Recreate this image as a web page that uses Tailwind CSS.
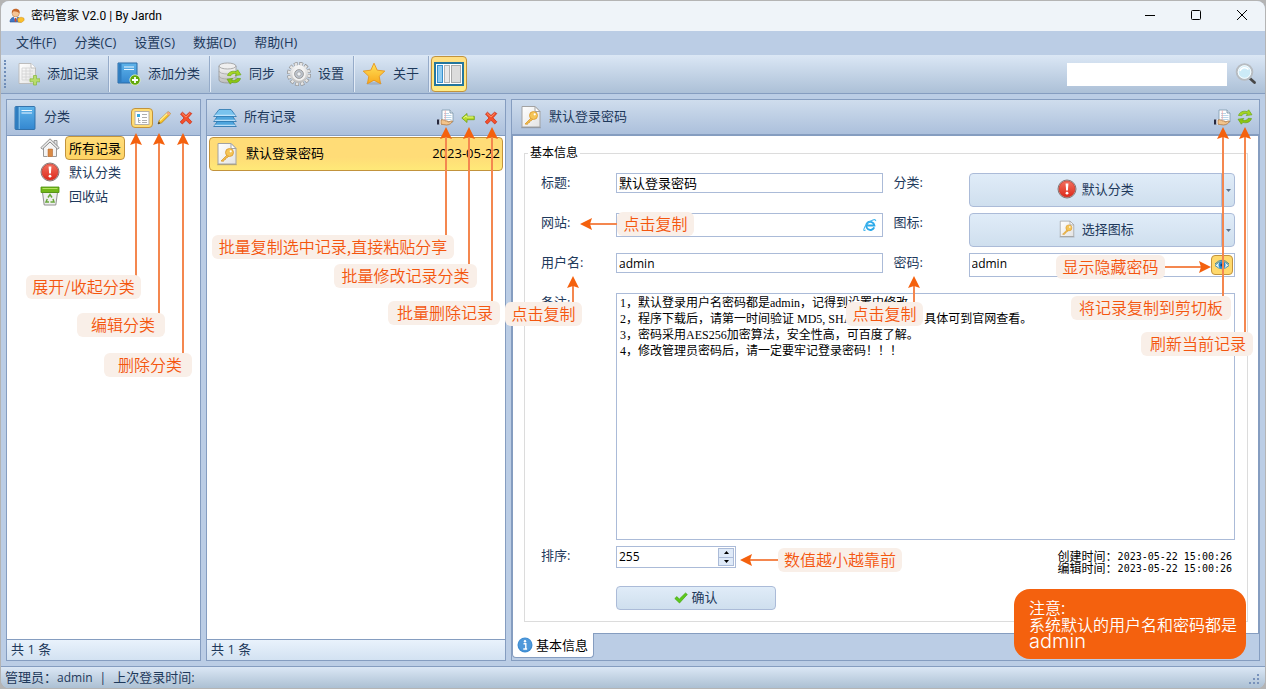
<!DOCTYPE html>
<html lang="zh-CN">
<head>
<meta charset="utf-8">
<meta name="viewport" content="width=device-width, initial-scale=1">
<title>密码管家 V2.0 | By Jardn</title>
<script src="https://cdn.jsdelivr.net/npm/@tailwindcss/browser@4"></script>
</head>
<body class="bg-[#b4b4b4] font-['Open_Sans','Noto_Sans_CJK_SC',sans-serif] text-[13px] leading-[18px] text-[#1e395b]">

<!-- Shared icons -->
<svg class="absolute h-0 w-0" aria-hidden="true">
  <defs>
    <linearGradient id="gBlue" x1="0" y1="0" x2="0" y2="1"><stop offset="0" stop-color="#5fb4ea"/><stop offset="1" stop-color="#3487d0"/></linearGradient>
    <linearGradient id="gGold" x1="0" y1="0" x2="0" y2="1"><stop offset="0" stop-color="#ffe25a"/><stop offset="1" stop-color="#f8a81c"/></linearGradient>
    <linearGradient id="gGray" x1="0" y1="0" x2="0" y2="1"><stop offset="0" stop-color="#fafafa"/><stop offset="1" stop-color="#bcbcbc"/></linearGradient>
    <linearGradient id="gPage" x1="0" y1="0" x2="1" y2="1"><stop offset="0" stop-color="#fff"/><stop offset="1" stop-color="#e3e3e3"/></linearGradient>
    <linearGradient id="gRed" x1="0" y1="0" x2="0" y2="1"><stop offset="0" stop-color="#f2705e"/><stop offset="1" stop-color="#dd2a1c"/></linearGradient>
  </defs>
  <symbol id="keydoc" viewBox="0 0 22 24">
    <path d="M2 1.500h13l5 5V22H2z" fill="url(#gPage)" stroke="#a2a2a2"/>
    <path d="M1 22.700h20" stroke="#777" stroke-opacity=".5"/>
    <path d="M15 1.500V6.500h5z" fill="#fff" stroke="#a2a2a2" stroke-linejoin="round"/>
    <path d="M11.500 12.500L5 19l2.500.3.500-1.500 1.500-.3.300-1.500 1.500-.3 2-2" fill="#f2c04c" stroke="#d9982e" stroke-width=".8" stroke-linejoin="round"/>
    <circle cx="13.500" cy="10.500" r="4" fill="#f5c557" stroke="#d9982e" stroke-width=".8"/>
    <circle cx="14.700" cy="9.300" r="1.100" fill="#fff"/>
  </symbol>
  <symbol id="alert" viewBox="0 0 20 20">
    <circle cx="10" cy="10" r="9" fill="#d9d2d0" stroke="#7a6c6a" stroke-width=".9"/>
    <circle cx="10" cy="10" r="8" fill="url(#gRed)" stroke="#c32a20" stroke-width=".6"/>
    <path d="M8.600 4.500h2.800l-.5 7H9.100z" fill="#fff"/><circle cx="10" cy="14.200" r="1.400" fill="#fff"/>
  </symbol>
  <symbol id="cross" viewBox="0 0 14 14">
    <path d="M1.500 3L3.500 1.200 7 4.500l3.500-3.300L12.800 2.500 9 6.800l3.800 4L10.800 13 7 9.300 3.300 13l-2.100-2L5 7z" fill="#f4502c" stroke="#c9260c" stroke-width=".7" stroke-linejoin="round"/>
    <path d="M3 2.500L7 6l3.700-3.500" fill="none" stroke="#ff9a6e" stroke-width=".8"/>
  </symbol>
  <symbol id="share" viewBox="0 0 17 17">
    <path d="M5 1h8l3 3v9H5z" fill="#fff" stroke="#86a0b4" stroke-width=".9"/>
    <path d="M13 1v3h3" fill="#dfe9f1" stroke="#6f8ba2" stroke-width=".8"/>
    <path d="M7 4.500h5M7 6.500h7.500M7 8.500h7.500M7 10.500h7.500" stroke="#a9cbe2" stroke-width=".8"/>
    <path d="M8.300 1.500v11" stroke="#ee9d9d" stroke-width=".7"/>
    <path d="M0 10.500h2.500v5H0z" fill="#26283e"/><path d="M2.500 10.500h1.500v5H2.500z" fill="#fff"/>
    <path d="M4 11c2-.8 3.200.2 4.500.8 1.500 0 2.700.2 2.400 1.200 1.700-.2 3-1.400 4.600-1-.6 2-2.800 3.800-5.800 4-2 .1-3.800-.8-5.700-.8z" fill="#f2c48c" stroke="#a86e38" stroke-width=".7"/>
  </symbol>
  <symbol id="refresh" viewBox="0 0 16 16">
    <path d="M1.500 6.500C2.300 3 6.500 1.300 10 2.700l1.700-1.900 3.300 5-5.800.8 1.300-1.700C8 3.900 5.600 4.800 4.800 6.700z" fill="#a4d421" stroke="#5fa012" stroke-width=".6" stroke-linejoin="round"/>
    <path d="M14.500 9.500c-.8 3.500-5 5.200-8.500 3.800l-1.700 1.900-3.300-5 5.800-.8-1.300 1.700c2.500 1 4.900.1 5.700-1.800z" fill="#8cc612" stroke="#5fa012" stroke-width=".6" stroke-linejoin="round"/>
  </symbol>
  <symbol id="book" viewBox="0 0 22 24">
    <path d="M1 1.500Q1 .5 2 .5h18q1 0 1 1v21q0 1-1 1H2q-1 0-1-1z" fill="url(#gBlue)" stroke="#2a6ba6" stroke-width=".9"/>
    <path d="M1.500 1h3.300v22H1.500z" fill="#2f7dbf"/><path d="M5.200 1v22" stroke="#a9d8f5" stroke-width=".7"/>
    <path d="M7.500 4.500h10.500M7.500 7h10.500" stroke="#e9f6ff" stroke-width="1.100"/>
  </symbol>
</svg>

<div class="relative flex min-h-screen flex-col p-px">
  <div class="flex flex-1 flex-col overflow-hidden rounded-lg bg-[#bbcde5]">

    <header class="flex h-[30px] shrink-0 items-center justify-between bg-[#eff4f9] pl-2 text-xs text-black">
      <div class="flex items-center gap-[6px]">
        <svg class="h-4 w-4" viewBox="0 0 16 16" aria-hidden="true">
          <path d="M1 14c0-4 3-5 5.500-5S12 10 12 14z" fill="#3f78c8" stroke="#28518f" stroke-width=".6"/>
          <path d="M4.800 9l1.700 3.500L8.200 9z" fill="#fff"/><path d="M6 10h1l.5 3-1 1-1-1z" fill="#d1462f"/>
          <circle cx="6.700" cy="5.300" r="3.600" fill="#f6c595" stroke="#b67a44" stroke-width=".5"/>
          <path d="M2.900 5.200C2.500 1.500 5 .6 7 .7c2.500.1 4.200 1.900 3.500 4.700C9.500 3.500 6 3.800 4.500 3.200z" fill="#c5672a"/>
          <path d="M8.500 10.500l3.500-1.300 2.800.8.400 2.300-2.600 2.100-3.500-.4z" fill="#fbc02c" stroke="#d08d16" stroke-width=".5"/>
        </svg>
        <h1 class="font-['Roboto','Noto_Sans_CJK_SC',sans-serif]">密码管家 V2.0 | By Jardn</h1>
      </div>
      <div class="flex h-full text-black">
        <button class="flex w-[46px] items-center justify-center" aria-label="最小化"><svg class="h-3 w-3" viewBox="0 0 12 12"><path d="M1 5.500h10" stroke="#000"/></svg></button>
        <button class="flex w-[46px] items-center justify-center" aria-label="最大化"><svg class="h-3 w-3" viewBox="0 0 12 12"><rect x="1.500" y=".5" width="9" height="9" rx="1" fill="none" stroke="#000"/></svg></button>
        <button class="flex w-[46px] items-center justify-center" aria-label="关闭"><svg class="h-3 w-3" viewBox="0 0 12 12"><path d="M1 0l10 10M11 0L1 10" stroke="#000"/></svg></button>
      </div>
    </header>

    <nav class="flex h-6 shrink-0 items-center gap-[18px] pb-[2px] pl-[15px]" aria-label="菜单">
      <button>文件(F)</button><button>分类(C)</button><button>设置(S)</button><button>数据(D)</button><button>帮助(H)</button>
    </nav>

    <div class="flex h-[39px] shrink-0 items-center border-b border-[#859dc0] bg-linear-to-b from-[#dbe7f5] to-[#acc0d7] pr-2" role="toolbar">
      <div class="ml-[3px] h-7 w-0 border-l-2 border-dotted border-[#6f8db8]"></div>
      <button class="ml-[10px] flex items-center gap-[7px]">
        <svg class="h-6 w-6" viewBox="0 0 24 24"><path d="M3 1.500h12l4.500 4.500v15.500H3z" fill="url(#gPage)" stroke="#bdbdbd"/><path d="M6 6h8M6 9h11M6 12h11M6 15h11M6 18h8M6 6v12M10 6v12M14 6v12" stroke="#d2d2d2" stroke-width=".8"/><path d="M15 1.500V6h4.500" fill="#fff" stroke="#bdbdbd"/><path d="M17.500 13.500h3v3.300h3.500v3h-3.500V23h-3v-3.200H14v-3h3.500z" fill="#b9dd6c" stroke="#8cbb45" stroke-width=".8"/></svg>
        <span class="pb-[2px]">添加记录</span></button>
      <div class="ml-[9px] h-9 w-px bg-[#95abc9] shadow-[1px_0_0_#e3ecf7]"></div>
      <button class="ml-2 flex items-center gap-[7px]">
        <svg class="h-6 w-6" viewBox="0 0 24 24"><path d="M1 1h19v20H1z" fill="url(#gBlue)" stroke="#2a6ba6"/><path d="M1.500 1.500h3v19h-3z" fill="#2f7dbf"/><path d="M7 5h10M7 7.500h10" stroke="#e9f6ff"/><circle cx="18" cy="18" r="5.200" fill="#62a80b" stroke="#e3f3c8" stroke-width=".8"/><path d="M18 15v6M15 18h6" stroke="#fff" stroke-width="1.800"/></svg>
        <span class="pb-[2px]">添加分类</span></button>
      <div class="ml-[9px] h-9 w-px bg-[#95abc9] shadow-[1px_0_0_#e3ecf7]"></div>
      <button class="ml-2 flex items-center gap-[7px]">
        <svg class="h-6 w-6" viewBox="0 0 24 24"><path d="M1 4v14c0 4 17 4 17 0V4z" fill="url(#gGray)" stroke="#949494" stroke-width=".8"/><ellipse cx="9.500" cy="4" rx="8.500" ry="3" fill="#efefef" stroke="#999" stroke-width=".8"/><path d="M1 9c0 4 17 4 17 0M1 14c0 4 17 4 17 0" fill="none" stroke="#a5a5a5" stroke-width=".8"/><use href="#refresh" x="8" y="7" width="16" height="16"/></svg>
        <span class="pb-[2px]">同步</span></button>
      <button class="ml-3 flex items-center gap-[7px]">
        <svg class="h-6 w-6" viewBox="0 0 24 24"><circle cx="12" cy="12" r="10" fill="none" stroke="#8c8c8c" stroke-width="4" stroke-dasharray="3.600 1.636"/><circle cx="12" cy="12" r="10" fill="none" stroke="#e4e4e4" stroke-width="2.800" stroke-dasharray="2.600 2.636" stroke-dashoffset="-.5"/><circle cx="12" cy="12" r="9" fill="url(#gGray)"/><circle cx="12" cy="12" r="5.800" fill="none" stroke="#f3f3f3" stroke-width="1.800"/><circle cx="12" cy="12" r="4.300" fill="#c2cad6" stroke="#999" stroke-width="1"/><circle cx="12" cy="12" r="2.200" fill="#edf1f5" stroke="#999" stroke-width=".8"/></svg>
        <span class="pb-[2px]">设置</span></button>
      <div class="ml-[9px] h-9 w-px bg-[#95abc9] shadow-[1px_0_0_#e3ecf7]"></div>
      <button class="ml-2 flex items-center gap-[7px]">
        <svg class="h-6 w-6" viewBox="0 0 24 24"><ellipse cx="12" cy="21.500" rx="8" ry="1.300" fill="#8a9ab0" fill-opacity=".5"/><path d="M12 1.200l3.200 7 7.600.9-5.600 5.200 1.400 7.500L12 18.200l-6.600 3.600 1.400-7.500L1.200 9.100l7.600-.9z" fill="url(#gGold)" stroke="#e7951c" stroke-width=".9" stroke-linejoin="round"/></svg>
        <span class="pb-[2px]">关于</span></button>
      <div class="ml-[9px] h-9 w-px bg-[#95abc9] shadow-[1px_0_0_#e3ecf7]"></div>
      <button class="ml-[2px] flex h-9 w-9 items-center justify-center rounded-sm border border-[#c2933c] bg-linear-to-b from-[#ffdf83] to-[#ffec85]" aria-label="布局" aria-pressed="true">
        <svg class="h-6 w-[30px]" viewBox="0 0 30 24"><rect x="1" y="1" width="28" height="22" fill="#fff" stroke="#23769e" stroke-width="2"/><rect x="3.500" y="3.500" width="5" height="17" fill="#8fccf1" stroke="#3690cd"/><rect x="10.500" y="3.500" width="5" height="17" fill="#e9e9e9" stroke="#b2b2b2"/><rect x="17.500" y="3.500" width="9" height="17" fill="#dcdcdc" stroke="#a9a9a9"/></svg>
      </button>
      <input type="search" aria-label="搜索" class="ml-auto h-[23px] w-40 bg-white px-1 outline-none">
      <button class="ml-2" aria-label="开始搜索">
        <svg class="h-6 w-[22px]" viewBox="0 0 22 24"><path d="M14.500 16l5 4.500" stroke="#474747" stroke-width="2.800" stroke-linecap="round"/><circle cx="9.500" cy="10" r="7.800" fill="#d7effa" stroke="#b7bcc1" stroke-width="2"/><circle cx="9.500" cy="10" r="6.300" fill="#ccebf8" stroke="#fff" stroke-width=".8"/><path d="M5 9c1-3.500 6-4.500 8.500-1.500" stroke="#fff" stroke-width="1.500" fill="none"/></svg>
      </button>
    </div>

    <main class="flex flex-1 gap-[5px] p-[5px]">

      <section class="flex w-[195px] shrink-0 flex-col border border-[#859dc0] bg-white" aria-label="分类">
        <div class="flex h-9 items-center border-b border-[#859dc0] bg-linear-to-b from-[#cfdded] to-[#acc0dc] pr-[7px] pl-[7px]">
          <svg class="h-6 w-[22px]" aria-hidden="true"><use href="#book"/></svg>
          <h2 class="ml-2 pb-[3px]">分类</h2>
          <button class="mr-1 ml-auto flex h-5 w-[22px] items-center justify-center rounded-sm border border-[#c2933c] bg-[#ffdc74]" aria-label="展开或收起分类"><svg class="h-4 w-4" viewBox="0 0 16 16"><rect x="1" y="1.500" width="14" height="13" fill="#fff" stroke="#b5b0a8"/><path d="M3 4h3v3H3z" fill="#35a9df"/><path d="M8 4.500h5M8 7.500h5M4.500 8v4.500M4.500 10.500h2M8 10.500h5M4.500 12.500h2M8 12.500h5" stroke="#a5a5a5" stroke-width=".9"/></svg></button>
          <button class="mr-2" aria-label="编辑分类"><svg class="h-[14px] w-[14px]" viewBox="0 0 14 14"><path d="M1 13l1.300-3.800L10.500 1.200q1-.7 2.200.4t.2 2L4.700 11.700z" fill="#f9c52c" stroke="#b68317" stroke-width=".8"/><path d="M3 9.500l7.500-7.200" stroke="#fff09a" stroke-width="1.200"/><path d="M1 13l.8-2.300 1.500 1.500z" fill="#333"/><path d="M10.500 1.200q1-.7 2.200.4t.2 2l-1 1-2.400-2.400z" fill="#f0a78a"/></svg></button>
          <button aria-label="删除分类"><svg class="h-[14px] w-[14px]"><use href="#cross"/></svg></button>
        </div>
        <ul class="flex-1 pl-[33px]">
          <li class="flex h-6 items-center gap-[5px]">
            <svg class="h-5 w-5" viewBox="0 0 20 20" aria-hidden="true"><path d="M14 2.500h3V8h-3z" fill="#e3e3e3" stroke="#878787" stroke-width=".8"/><path d="M3.500 9.500v9h13v-9L10 3.500z" fill="#f4f4f4" stroke="#9a9a9a"/><path d="M10 .8L.8 9.700l1.500 1.500L10 4l7.700 7.200 1.500-1.500z" fill="#e9e9e9" stroke="#777" stroke-width=".8" stroke-linejoin="round"/><path d="M7 10h6v8.500H7z" fill="#fff"/><path d="M8 11h4.500v7.500H8z" fill="#d98a45" stroke="#b3652b" stroke-width=".6"/></svg>
            <button class="h-6 w-[60px] rounded-sm border border-[#c2933c] bg-linear-to-b from-[#ffdd7a] to-[#ffd464] text-left text-black"><span class="pl-[3px]">所有记录</span></button></li>
          <li class="flex h-6 items-center gap-[9px]"><svg class="h-5 w-5" aria-hidden="true"><use href="#alert"/></svg><button>默认分类</button></li>
          <li class="flex h-6 items-center gap-[9px]">
            <svg class="h-5 w-5" viewBox="0 0 20 20" aria-hidden="true"><path d="M2.500 6.500h15L15.800 19H4.200z" fill="#eee" stroke="#858585" stroke-width=".9"/><path d="M1 1h18v5.500H1z" fill="#72b719" stroke="#4e910d" stroke-width=".8"/><path d="M2.500 2.500h15" stroke="#b5e360"/><path d="M8 11.500l2-3 2 3M13 13l1 3h-3.500M9 16H6l1.300-3" fill="none" stroke="#69a83c" stroke-width="1.500"/></svg>
            <button>回收站</button></li>
        </ul>
        <div class="h-[21px] border-t border-[#859dc0] bg-linear-to-b from-[#e9f2fc] to-[#d3e2f2] pl-1 leading-[19px]">共 1 条</div>
      </section>

      <section class="flex w-[300px] shrink-0 flex-col border border-[#859dc0] bg-white" aria-label="所有记录">
        <div class="flex h-9 items-center border-b border-[#859dc0] bg-linear-to-b from-[#cfdded] to-[#acc0dc] pr-[7px] pl-[6px]">
          <svg class="h-5 w-6" viewBox="0 0 24 20" aria-hidden="true"><g fill="#4fa5dd" stroke="#2a75ad" stroke-width=".8" stroke-linejoin="round"><path d="M5 12.500L.7 18.500h22.600L19 12.500z"/><path d="M5 7.500L.7 13.500h22.600L19 7.500z"/><path d="M6 1.500L.7 8.500h22.600L18 1.500z" fill="#79c3ee"/></g><path d="M1.500 17.300h21M1.500 12.300h21M1.500 7.300h21" stroke="#d2edff" stroke-width="1"/></svg>
          <h2 class="ml-[7px] pb-[3px]">所有记录</h2>
          <button class="mr-[7px] ml-auto" aria-label="批量复制"><svg class="h-[17px] w-[17px]"><use href="#share"/></svg></button>
          <button class="mr-[9px]" aria-label="批量修改分类"><svg class="h-[14px] w-[14px]" viewBox="0 0 14 14"><path d="M.8 7L6 2.500v2.800h7.300v3.400H6v2.800z" fill="#b9dc2c" stroke="#6fa014" stroke-width=".8" stroke-linejoin="round"/><path d="M2.500 7L5.300 4.800V6h7" stroke="#e9f88a" fill="none"/></svg></button>
          <button aria-label="批量删除"><svg class="h-[14px] w-[14px]"><use href="#cross"/></svg></button>
        </div>
        <div class="flex-1 px-[2px] py-px">
          <button class="flex h-[34px] w-full items-center rounded-sm border border-[#c2933c] bg-linear-to-b from-[#ffdc77] from-60% to-[#ffe978] pr-[2px] pl-[6px] text-black">
            <svg class="h-6 w-[22px]" aria-hidden="true"><use href="#keydoc"/></svg>
            <span class="ml-2 pb-[2px]">默认登录密码</span>
            <time class="ml-auto pb-[2px]" datetime="2023-05-22">2023-05-22</time>
          </button>
        </div>
        <div class="h-[21px] border-t border-[#859dc0] bg-linear-to-b from-[#e9f2fc] to-[#d3e2f2] pl-1 leading-[19px]">共 1 条</div>
      </section>

      <section class="flex min-w-[620px] flex-1 flex-col border border-[#859dc0]" aria-label="默认登录密码">
        <div class="flex h-9 shrink-0 items-center border-b-2 border-[#859dc0] bg-linear-to-b from-[#cfdded] to-[#acc0dc] pr-[6px] pl-2">
          <svg class="h-6 w-[22px]" aria-hidden="true"><use href="#keydoc"/></svg>
          <h2 class="ml-[7px] pb-[2px]">默认登录密码</h2>
          <button class="mr-[6px] ml-auto" aria-label="复制到剪切板"><svg class="h-[17px] w-[17px]"><use href="#share"/></svg></button>
          <button aria-label="刷新当前记录"><svg class="h-4 w-4"><use href="#refresh"/></svg></button>
        </div>

        <form class="flex flex-1 flex-col border-x border-b border-[#859dc0] bg-white pt-[9px] pr-[10px] pb-[11px] pl-[11px]">
          <fieldset class="flex min-w-0 flex-1 flex-col border border-[#dcdcdc] pr-[12px] pb-[11px] pl-[16px]">
            <legend class="-ml-[13px] px-[2px] text-xs leading-4 text-black">基本信息</legend>
            <div class="grid grid-cols-[75px_1fr_86px_1fr] grid-rows-[40px_40px_40px] items-start pt-3">
              <label for="title">标题:</label>
              <input id="title" type="text" value="默认登录密码" class="h-5 w-full border border-[#abbbd8] px-[2px] pb-[2px] text-black outline-none">
              <span class="pl-[11px]">分类:</span>
              <div class="flex h-[34px] rounded-sm border border-[#abbbd8] bg-linear-to-b from-[#e0ecf8] to-[#cfdfee]">
                <button type="button" class="flex flex-1 items-center justify-center gap-[5px] pb-[2px]"><svg class="h-5 w-5" aria-hidden="true"><use href="#alert"/></svg>默认分类</button>
                <button type="button" aria-label="选择分类" class="flex w-[13px] items-center justify-center border-l border-[#abbbd8]"><svg class="h-[3px] w-[5px]" viewBox="0 0 5 3"><path d="M0 0h5L2.500 3z" fill="#5e6f87"/></svg></button>
              </div>
              <label for="site">网站:</label>
              <div class="flex h-6 items-center border border-[#abbbd8] pr-[4px]">
                <input id="site" type="text" class="h-5 min-w-0 flex-1 px-[2px] text-black outline-none">
                <button type="button" aria-label="打开网站"><svg class="h-[14px] w-4" viewBox="0 0 16 16"><path d="M12.800 10.800C11.800 13.300 8.300 14.500 5.800 12.900 3.300 11.300 3.100 7.500 5.200 5.500c2.500-2.300 7.300-1 7.800 3H5" fill="none" stroke="#2baaea" stroke-width="2.200"/><path d="M3 13.500c-3.500 2.800-2.300-2.500 1.500-6.700C8.800 2.200 15 .2 14.500 3.500" fill="none" stroke="#40b4ed" stroke-width="1.200"/></svg></button>
              </div>
              <span class="pl-[11px]">图标:</span>
              <div class="flex h-[34px] rounded-sm border border-[#abbbd8] bg-linear-to-b from-[#e0ecf8] to-[#cfdfee]">
                <button type="button" class="flex flex-1 items-center justify-center gap-[5px] pb-[2px]"><svg class="h-[18px] w-5" aria-hidden="true"><use href="#keydoc"/></svg>选择图标</button>
                <button type="button" aria-label="更多图标" class="flex w-[13px] items-center justify-center border-l border-[#abbbd8]"><svg class="h-[3px] w-[5px]" viewBox="0 0 5 3"><path d="M0 0h5L2.500 3z" fill="#5e6f87"/></svg></button>
              </div>
              <label for="user">用户名:</label>
              <input id="user" type="text" value="admin" class="h-5 w-full border border-[#abbbd8] px-[2px] text-xs text-black outline-none">
              <label for="pass" class="pl-[11px]">密码:</label>
              <div class="flex h-6 items-center border border-[#abbbd8] pr-[1px]">
                <input id="pass" type="text" value="admin" class="h-5 min-w-0 flex-1 px-[2px] pb-[3px] text-xs text-black outline-none">
                <button type="button" aria-label="显示隐藏密码" class="flex h-5 w-[22px] items-center justify-center rounded-sm border border-[#c2933c] bg-[#ffd96c]"><svg class="h-3 w-4" viewBox="0 0 16 12"><path d="M1 6.500Q8-1.500 15 6.500 8 13 1 6.500z" fill="#eaf5f4" stroke="#4693b5"/><circle cx="8" cy="6" r="3.500" fill="#2488d2"/><circle cx="8" cy="6" r="1.600" fill="#123f75"/><path d="M1 5Q8-2.500 15 5" fill="none" stroke="#347ea1"/></svg></button>
              </div>
            </div>
            <div class="flex flex-1 items-stretch">
              <label for="notes" class="w-[75px] shrink-0">备注:</label>
              <textarea id="notes" class="flex-1 resize-none border border-[#abbbd8] px-[3px] py-px font-['Liberation_Serif','Noto_Sans_CJK_SC',serif] text-xs leading-4 text-black outline-none">1，默认登录用户名密码都是admin，记得到设置中修改。
2，程序下载后，请第一时间验证 MD5, SHA1 的校验值， 具体可到官网查看。
3，密码采用AES256加密算法，安全性高，可百度了解。
4，修改管理员密码后，请一定要牢记登录密码！！！</textarea>
            </div>
            <div class="mt-[6px] flex h-[22px] items-start">
              <label for="order" class="w-[75px] shrink-0">排序:</label>
              <div class="flex h-[22px] w-[120px] border border-[#abbbd8] p-px">
                <input id="order" type="text" inputmode="numeric" value="255" class="min-w-0 flex-1 px-px text-xs text-black outline-none">
                <div class="flex w-4 flex-col border border-[#abbbd8] bg-[#dfeaf8]">
                  <button type="button" aria-label="增加" class="flex flex-1 items-center justify-center border-b border-[#abbbd8]"><svg class="h-[3px] w-[5px]" viewBox="0 0 5 3"><path d="M0 3h5L2.500 0z"/></svg></button>
                  <button type="button" aria-label="减少" class="flex flex-1 items-center justify-center"><svg class="h-[3px] w-[5px]" viewBox="0 0 5 3"><path d="M0 0h5L2.500 3z"/></svg></button>
                </div>
              </div>
              <div class="mt-[5px] mr-[3px] ml-auto text-xs leading-3 text-black">
                <p class="flex h-3 items-center">创建时间：<span class="font-['DejaVu_Sans_Mono',monospace] text-[10px]">2023-05-22 15:00:26</span></p>
                <p class="flex h-3 items-center">编辑时间：<span class="font-['DejaVu_Sans_Mono',monospace] text-[10px]">2023-05-22 15:00:26</span></p>
              </div>
            </div>
            <button type="button" class="mt-[18px] ml-[75px] flex h-6 w-40 shrink-0 items-center justify-center gap-[3px] rounded-sm border border-[#abbbd8] bg-linear-to-b from-[#e0ecf8] to-[#cfdfee] pb-[2px]">
              <svg class="h-[14px] w-[14px]" viewBox="0 0 14 14"><path d="M.8 8.500L3 6.600l2.200 2.600L11.500 3l1.800 1.500L5.500 13z" fill="#5cc81c" stroke="#43a60f" stroke-width=".7"/></svg>确认</button>
          </fieldset>
        </form>
        <div class="flex h-[26px] shrink-0" role="tablist">
          <button role="tab" aria-selected="true" class="-mt-px mb-[2px] flex items-center gap-[3px] rounded-b-sm border border-t-0 border-[#859dc0] bg-white pr-[5px] pl-[4px] text-black">
            <svg class="h-4 w-4" viewBox="0 0 16 16"><circle cx="8" cy="8" r="7.500" fill="#3f8dd2"/><circle cx="8" cy="7.500" r="6.300" fill="#5ca2e0" fill-opacity=".6"/><circle cx="8" cy="4.300" r="1.200" fill="#fff"/><path d="M6.500 6.800h2.300v5M6.300 12h3.800" stroke="#fff" stroke-width="1.400" fill="none"/></svg>基本信息</button>
        </div>
      </section>
    </main>

    <footer class="flex h-[22px] shrink-0 items-center justify-between border-t border-[#859dc0] bg-linear-to-b from-[#dbe7f5] to-[#acc0d3] pr-1 pl-1">
      <p class="flex whitespace-pre"><span>管理员：</span><span class="text-xs leading-5">admin</span><span>  |  上次登录时间:</span></p>
      <svg class="mt-1 h-3 w-3" viewBox="0 0 12 12" aria-hidden="true"><path d="M8 0h2v2H8zM4 4h2v2H4zM8 4h2v2H8zM0 8h2v2H0zM4 8h2v2H4zM8 8h2v2H8z" fill="#7892bb"/></svg>
    </footer>
  </div>

  <!-- Callouts laid over the window, anchored to the nearest side -->
  <div class="pointer-events-none absolute inset-0 font-['Noto_Sans_CJK_SC',sans-serif] text-base font-[350] whitespace-nowrap text-[#f4560e]">
    <svg class="absolute top-0 left-0 h-full w-full overflow-visible" fill="#f4610e" stroke="none" aria-hidden="true">
      <symbol id="up" viewBox="0 0 12 12"><path d="M6 0l6 12-6-2-6 2z"/></symbol>
      <path d="M136 143v133M159 143v172M183 143v212M446 137v100M469 137v129M492 137v166M573 286v18M914 286v18M590 224h28" stroke="#f4874f" stroke-width="2"/>
      <use href="#up" x="130" y="133" width="12" height="12"/><use href="#up" x="153" y="133" width="12" height="12"/><use href="#up" x="177" y="133" width="12" height="12"/>
      <use href="#up" x="440" y="127" width="12" height="12"/><use href="#up" x="463" y="127" width="12" height="12"/><use href="#up" x="486" y="127" width="12" height="12"/>
      <use href="#up" x="567" y="276" width="12" height="12"/><use href="#up" x="908" y="276" width="12" height="12"/>
      <path d="M580 224l12-6-2 6 2 6z"/>
    </svg>
    <svg class="absolute top-0 right-0 h-[340px] w-[110px]" viewBox="0 0 110 340" fill="#f4610e" aria-hidden="true">
      <path d="M67 137v160M89 137v196M8 267h39" stroke="#f4874f" stroke-width="2"/>
      <use href="#up" x="61" y="127" width="12" height="12"/><use href="#up" x="83" y="127" width="12" height="12"/><path d="M55 267l-12-6 2 6-2 6z"/>
    </svg>
    <svg class="absolute bottom-[123px] left-[740px] h-3 w-10" viewBox="0 0 40 12" fill="#f4610e" aria-hidden="true"><path d="M10 6h30" stroke="#f4874f" stroke-width="2"/><path d="M0 6l12-6-2 6 2 6z"/></svg>

    <span class="absolute top-[275px] left-[26px] flex h-6 w-[115px] items-center justify-center rounded-md bg-[#f9efe8] pb-[2px]">展开/收起分类</span>
    <span class="absolute top-[313px] left-[77px] flex h-6 w-[88px] items-center justify-end rounded-md bg-[#f9efe8] pr-[10px] pb-[2px]">编辑分类</span>
    <span class="absolute top-[353px] left-[104px] flex h-6 w-[88px] items-center justify-end rounded-md bg-[#f9efe8] pr-[10px] pb-[2px]">删除分类</span>
    <span class="absolute top-[235px] left-[212px] flex h-6 w-[242px] items-center justify-center rounded-md bg-[#f9efe8] pb-[2px]">批量复制选中记录,直接粘贴分享</span>
    <span class="absolute top-[264px] left-[334px] flex h-6 w-[143px] items-center justify-center rounded-md bg-[#f9efe8] pb-[2px]">批量修改记录分类</span>
    <span class="absolute top-[301px] left-[388px] flex h-6 w-[112px] items-center justify-end rounded-md bg-[#f9efe8] pr-[7px] pb-[2px]">批量删除记录</span>
    <span class="absolute top-[302px] left-[505px] flex h-6 w-[77px] items-center justify-center rounded-md bg-[#f9efe8] pb-[2px]">点击复制</span>
    <span class="absolute top-[212px] left-[617px] flex h-6 w-[77px] items-center justify-center rounded-md bg-[#f9efe8] pb-[2px]">点击复制</span>
    <span class="absolute top-[302px] left-[846px] flex h-6 w-[77px] items-center justify-center rounded-md bg-[#f9efe8] pb-[2px]">点击复制</span>
    <span class="absolute bottom-[117px] left-[778px] flex h-6 w-[124px] items-center justify-center rounded-md bg-[#f9efe8] pb-[2px]">数值越小越靠前</span>
    <span class="absolute top-[255px] right-[101px] flex h-6 w-[109px] items-center justify-center rounded-md bg-[#f9efe8] pb-[2px]">显示隐藏密码</span>
    <span class="absolute top-[296px] right-[35px] flex h-6 w-[160px] items-center justify-center rounded-md bg-[#f9efe8] pb-[2px]">将记录复制到剪切板</span>
    <span class="absolute top-[332px] right-[13px] flex h-6 w-[112px] items-center justify-end rounded-md bg-[#f9efe8] pr-[7px] pb-[2px]">刷新当前记录</span>
    <div class="absolute right-5 bottom-[30px] h-[70px] w-[232px] rounded-2xl bg-[#f4610e] px-[15px] pt-[10px] leading-[17px] text-white">
      <p>注意:</p><p>系统默认的用户名和密码都是</p><p class="font-['Inter',sans-serif] text-xl leading-[17px] font-light">admin</p>
    </div>
  </div>
</div>
</body>
</html>
